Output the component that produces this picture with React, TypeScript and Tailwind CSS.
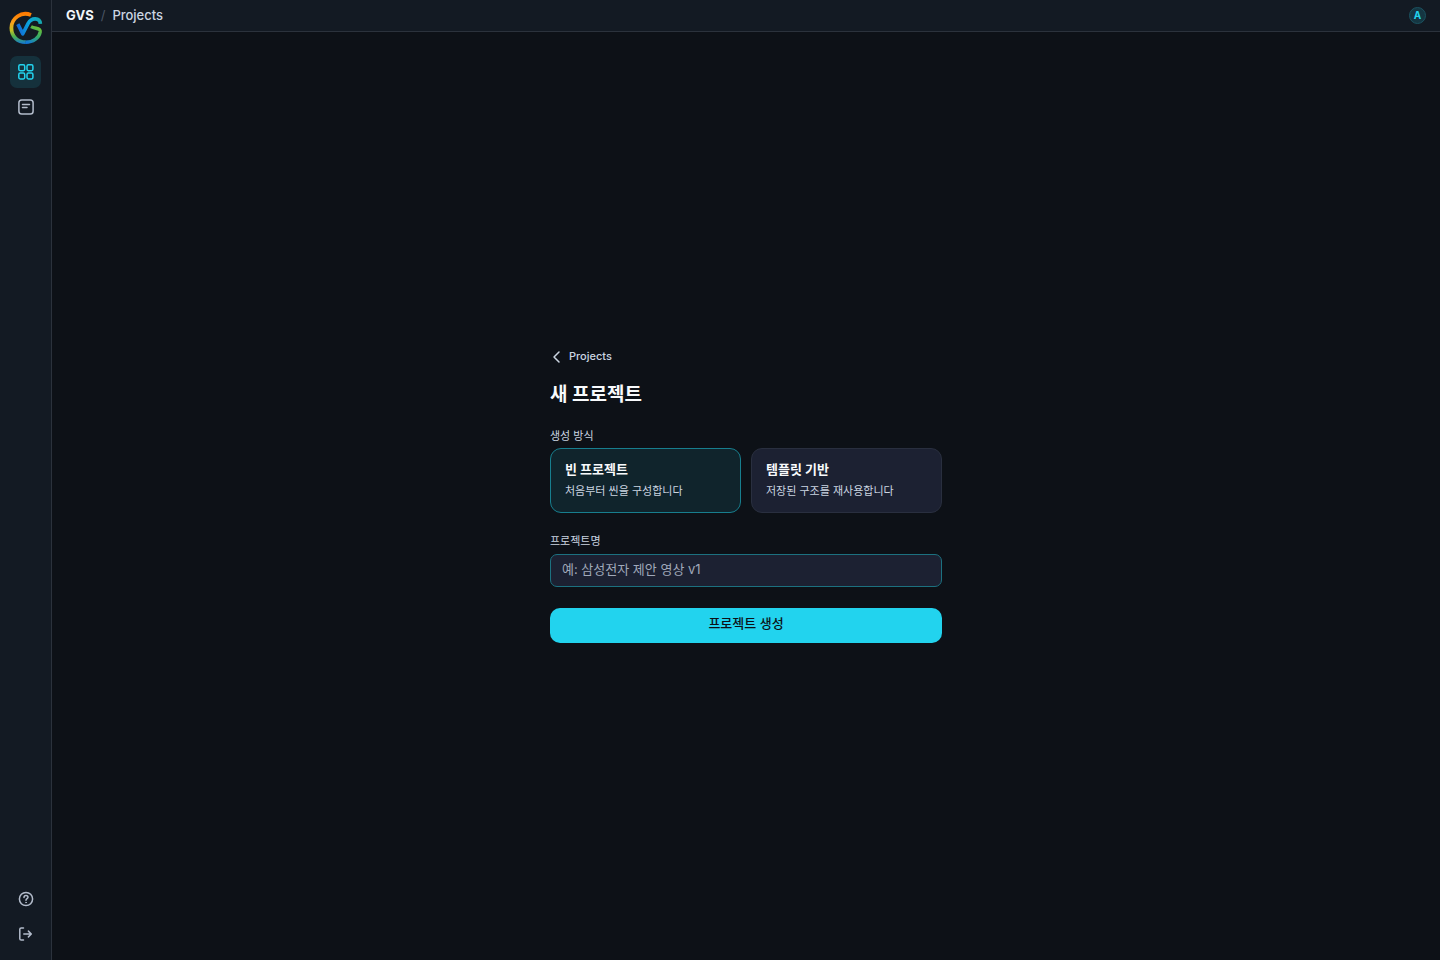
import React, { useState } from 'react';

const Logo: React.FC = () => (
  <svg width="34" height="34" viewBox="0 0 34 34" fill="none" aria-hidden="true">
    <defs>
      <linearGradient id="ring" x1="14" y1="2" x2="15" y2="33" gradientUnits="userSpaceOnUse">
        <stop offset="0" stopColor="#ff7a00" />
        <stop offset="0.3" stopColor="#f9a01b" />
        <stop offset="0.55" stopColor="#c0bf25" />
        <stop offset="0.75" stopColor="#4caf50" />
        <stop offset="1" stopColor="#1177d8" />
      </linearGradient>
      <linearGradient id="wave" x1="9" y1="18" x2="32" y2="14" gradientUnits="userSpaceOnUse">
        <stop offset="0" stopColor="#1268d6" />
        <stop offset="0.5" stopColor="#0aa5dc" />
        <stop offset="1" stopColor="#14a8b0" />
      </linearGradient>
      <linearGradient id="tail" x1="28" y1="16" x2="19" y2="32" gradientUnits="userSpaceOnUse">
        <stop offset="0" stopColor="#6abf3a" />
        <stop offset="0.45" stopColor="#35ac68" />
        <stop offset="1" stopColor="#1177d8" />
      </linearGradient>
    </defs>
    <path d="M22 4C12.5 0 2.4 7 2.4 17C2.4 25.6 8.8 31.2 16.8 31.2" stroke="url(#ring)" strokeWidth="3.8" />
    <path d="M22 15.6C26.5 18.2 31.8 16.4 31.2 21C30.2 27 24 31.2 16.6 31.2" stroke="url(#tail)" strokeWidth="3.4" />
    <path d="M8.8 13.2L13.8 22.8L19 12.6C22.5 6.2 30.8 6.4 31.4 12.8" stroke="url(#wave)" strokeWidth="3.6" strokeLinejoin="round" />
  </svg>
);

const GridIcon: React.FC = () => (
  <svg width="16" height="16" viewBox="0 0 16 16" fill="none" stroke="currentColor" strokeWidth="1.5" aria-hidden="true">
    <rect x="0.8" y="0.8" width="5.9" height="5.9" rx="1.4" />
    <rect x="9" y="0.8" width="5.9" height="5.9" rx="1.4" />
    <rect x="0.8" y="9" width="5.9" height="5.9" rx="1.4" />
    <rect x="9" y="9" width="5.9" height="5.9" rx="1.4" />
  </svg>
);

const NoteIcon: React.FC = () => (
  <svg width="16" height="16" viewBox="0 0 16 16" fill="none" stroke="currentColor" strokeWidth="1.5" strokeLinecap="round" aria-hidden="true">
    <rect x="0.9" y="0.9" width="14.2" height="14.2" rx="2.8" />
    <path d="M4.5 5.5h7M4.5 8.5h4.5" />
  </svg>
);

const HelpIcon: React.FC = () => (
  <svg width="16" height="16" viewBox="0 0 16 16" fill="none" stroke="currentColor" strokeWidth="1.5" strokeLinecap="round" aria-hidden="true">
    <circle cx="8" cy="8" r="6.6" />
    <path d="M6 6.4C6 5.2 6.9 4.5 8 4.5s2 .7 2 1.8c0 1.3-2 1.5-2 2.9" />
    <circle cx="8" cy="11.5" r="0.5" fill="currentColor" strokeWidth="0.6" />
  </svg>
);

const LogoutIcon: React.FC = () => (
  <svg width="16" height="16" viewBox="0 0 16 16" fill="none" stroke="currentColor" strokeWidth="1.5" strokeLinecap="round" strokeLinejoin="round" aria-hidden="true">
    <path d="M5.5 14H3.2C2.3 14 1.8 13.5 1.8 12.7V3.3C1.8 2.5 2.3 2 3.2 2h2.3" />
    <path d="M5.8 8h7.4M10.4 5.1L13.3 8l-2.9 2.9" />
  </svg>
);

const modes = [
  { id: 'blank', title: '빈 프로젝트', description: '처음부터 씬을 구성합니다' },
  { id: 'template', title: '템플릿 기반', description: '저장된 구조를 재사용합니다' },
];

const Sidebar: React.FC = () => (
  <aside className="flex w-[52px] shrink-0 flex-col items-center border-r border-[#2b323c] bg-[#131a23] pt-[11px] pb-[10px] text-[#b3bccb]">
    <a href="#home" aria-label="GVS">
      <Logo />
    </a>
    <nav className="mt-[11px] flex flex-col gap-[3px]">
      <a href="#projects" aria-label="Projects" className="flex h-8 w-[31px] items-center justify-center rounded-[7px] bg-[#15313c] text-[#22d3ee]">
        <GridIcon />
      </a>
      <a href="#templates" aria-label="Templates" className="flex h-8 w-[31px] items-center justify-center rounded-[7px]">
        <NoteIcon />
      </a>
    </nav>
    <div className="mt-auto flex flex-col gap-[3px]">
      <button type="button" aria-label="Help" className="flex h-8 w-[31px] items-center justify-center">
        <HelpIcon />
      </button>
      <button type="button" aria-label="Log out" className="flex h-8 w-[31px] items-center justify-center">
        <LogoutIcon />
      </button>
    </div>
  </aside>
);

const Header: React.FC = () => (
  <header className="flex h-8 items-center justify-between border-b border-[#2b323c] bg-[#131a23] px-[14px]">
    <div className="flex items-center gap-[7px] pb-[2px] text-[13px] leading-4">
      <span className="font-bold text-[#f1f5f9]">GVS</span>
      <span className="text-[#4b5563]">/</span>
      <a href="#projects" className="font-medium text-[#cbd5e1]">Projects</a>
    </div>
    <button type="button" className="flex size-[17px] items-center justify-center rounded-full border border-[#1b5260] bg-[#153642] text-[10px] font-bold text-[#22d3ee]">
      A
    </button>
  </header>
);

const NewProjectForm: React.FC = () => {
  const [mode, setMode] = useState('blank');
  const [name, setName] = useState('');

  return (
    <form className="w-full max-w-[392px]" onSubmit={(e) => e.preventDefault()}>
      <a href="#projects" className="flex h-4 items-center gap-[6px] text-[11px] font-medium text-[#cbd5e1]">
        <svg width="13" height="14" viewBox="0 0 13 14" fill="none" stroke="currentColor" strokeWidth="1.5" strokeLinecap="round" strokeLinejoin="round" aria-hidden="true">
          <path d="M9 2L4 7l5 5" />
        </svg>
        Projects
      </a>
      <h1 className="mt-4 text-[19px] leading-7 font-bold text-[#f8fafc]">새 프로젝트</h1>

      <fieldset className="mt-[19px]">
        <legend className="h-5 text-[11px] leading-4 text-[#cbd5e1]">생성 방식</legend>
        <div className="grid grid-cols-2 gap-[10px]">
          {modes.map((item) => (
            <button
              key={item.id}
              type="button"
              aria-pressed={mode === item.id}
              onClick={() => setMode(item.id)}
              className={`flex h-[65px] flex-col rounded-[11px] border px-[14px] pt-[10px] text-left ${
                mode === item.id ? 'border-[#177e8e] bg-[#10242c]' : 'border-[#292f3f] bg-[#1c2132]'
              }`}
            >
              <span className="text-[13px] leading-5 font-bold text-[#f8fafc]">{item.title}</span>
              <span className="mt-1 text-[11px] leading-4 text-[#cbd5e1]">{item.description}</span>
            </button>
          ))}
        </div>
      </fieldset>

      <label htmlFor="project-name" className="mt-5 block text-[11px] leading-4 text-[#cbd5e1]">
        프로젝트명
      </label>
      <input
        id="project-name"
        type="text"
        value={name}
        onChange={(e) => setName(e.target.value)}
        placeholder="예: 삼성전자 제안 영상 v1"
        className="mt-[5px] block h-[33px] w-full rounded-[7px] border border-[#1c7180] bg-[#1c2132] px-[11px] pb-[2px] text-[13px] text-[#f1f5f9] outline-none placeholder:text-[#a0a9ba]"
      />
      <button type="submit" className="mt-[21px] block h-[35px] w-full rounded-[10px] bg-[#22d3ee] pb-[2px] text-[13px] font-medium text-[#0d1117]">
        프로젝트 생성
      </button>
    </form>
  );
};

export default function App() {
  return (
    <div className="flex min-h-screen bg-[#0d1117] font-['Inter','Noto_Sans_CJK_KR',sans-serif]">
      <Sidebar />
      <div className="flex min-w-0 flex-1 flex-col">
        <Header />
        <main className="flex flex-1 items-center justify-center pb-px">
          <NewProjectForm />
        </main>
      </div>
    </div>
  );
}
